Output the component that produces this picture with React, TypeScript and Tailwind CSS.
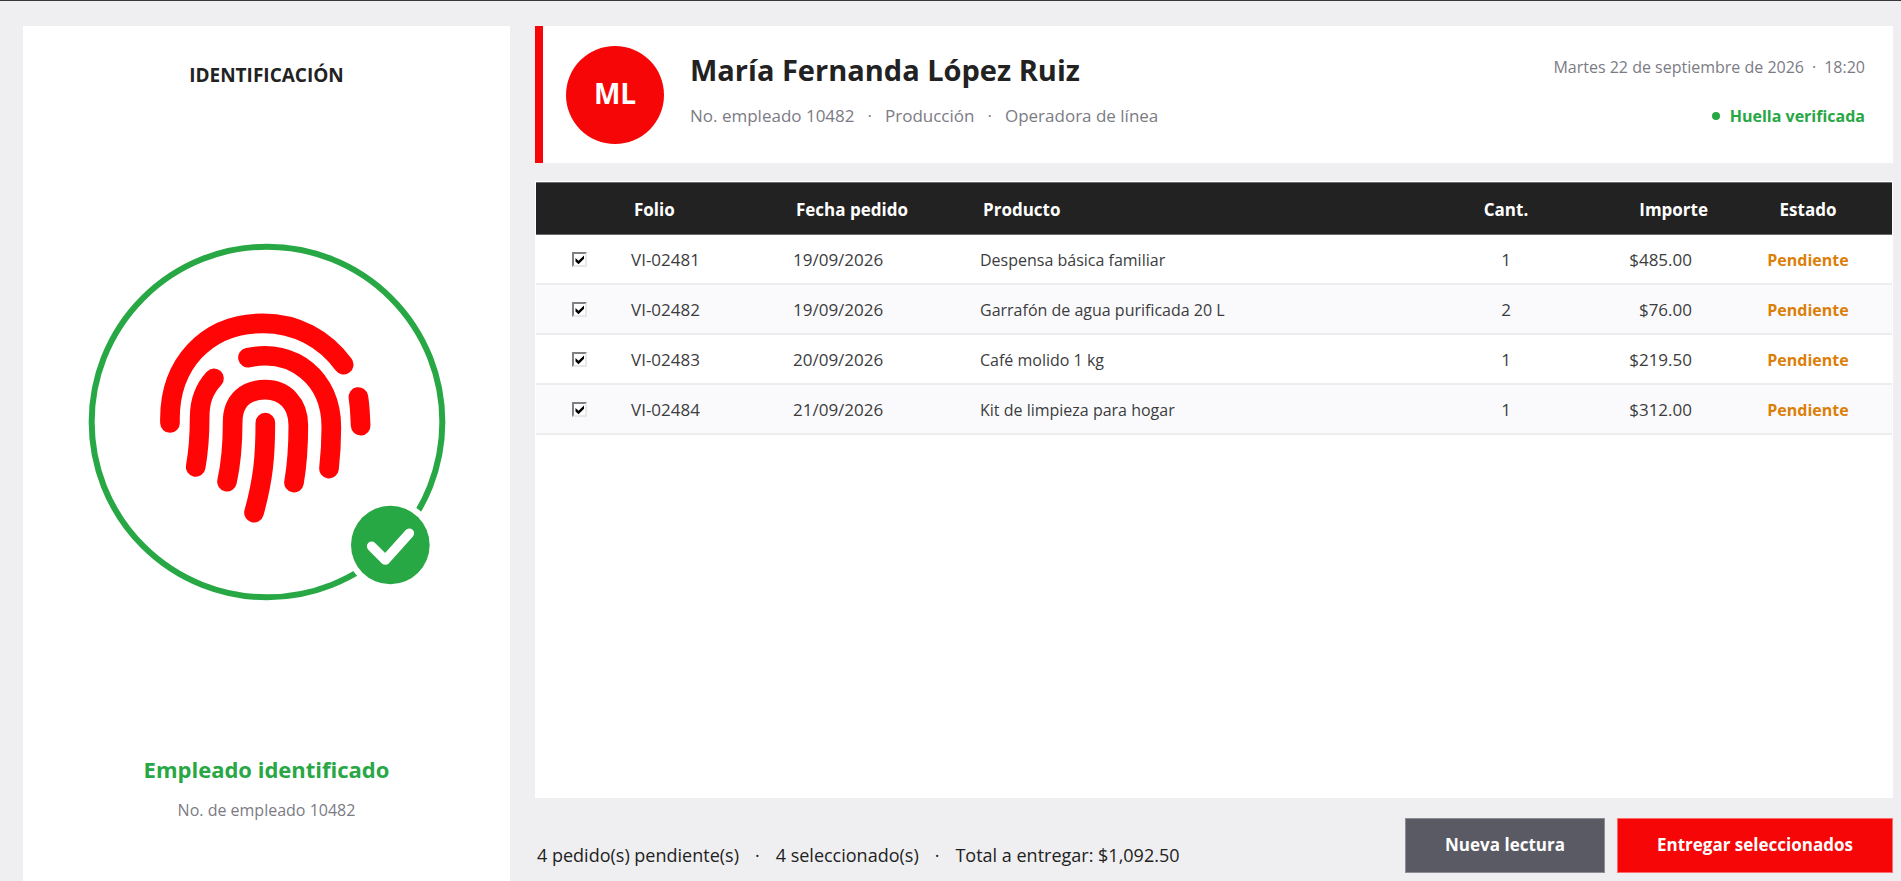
import { useState } from "react";

type Order = {
  folio: string;
  date: string;
  product: string;
  quantity: number;
  amount: number;
  status: string;
};

const orders: Order[] = [
  { folio: "VI-02481", date: "19/09/2026", product: "Despensa básica familiar", quantity: 1, amount: 485, status: "Pendiente" },
  { folio: "VI-02482", date: "19/09/2026", product: "Garrafón de agua purificada 20 L", quantity: 2, amount: 76, status: "Pendiente" },
  { folio: "VI-02483", date: "20/09/2026", product: "Café molido 1 kg", quantity: 1, amount: 219.5, status: "Pendiente" },
  { folio: "VI-02484", date: "21/09/2026", product: "Kit de limpieza para hogar", quantity: 1, amount: 312, status: "Pendiente" },
];

const money = (value: number) =>
  "$" + value.toLocaleString("en-US", { minimumFractionDigits: 2, maximumFractionDigits: 2 });

function FingerprintBadge() {
  return (
    <svg className="size-[358px] max-w-full" viewBox="25 38 1074 1074" fill="none" aria-hidden="true">
      <circle cx="562" cy="575" r="526" stroke="#28a745" strokeWidth="18" />
      <g stroke="#ff0505" strokeWidth="59" strokeLinecap="round" strokeLinejoin="round">
        <path d="M271 578 C266 402 380 279 550 279 C650 279 735 325 792 403" />
        <path d="M505 382 C642 352 755 445 755 590 C755 640 752 680 748 715" />
        <path d="M403 444 C372 478 360 512 360 560 C360 610 357 660 348 710" />
        <path d="M442 754 C455 695 459 640 459 575 C459 510 500 478 557 478 C615 478 656 520 656 585 C656 645 652 705 643 757" />
        <path d="M557 577 C557 680 550 750 523 847" />
        <path d="M836 500 C841 528 841 552 843 586" />
      </g>
      <circle cx="932" cy="944" r="136" fill="#ffffff" />
      <circle cx="932" cy="944" r="118" fill="#28a745" />
      <path d="M876 948 L917 989 L989 909" stroke="#ffffff" strokeWidth="29" strokeLinecap="round" strokeLinejoin="round" />
    </svg>
  );
}

function OrderCheckbox({ checked, label, onChange }: { checked: boolean; label: string; onChange: () => void }) {
  return (
    <span className="relative inline-block size-[15px] align-middle">
      <input
        type="checkbox"
        aria-label={label}
        checked={checked}
        onChange={onChange}
        className="block size-[15px] appearance-none border-2 border-t-[#808080] border-l-[#808080] border-r-[#e8e8e8] border-b-[#e8e8e8] bg-white"
      />
      {checked && (
        <svg className="pointer-events-none absolute inset-0 size-[15px]" viewBox="0 0 15 15" aria-hidden="true">
          <path d="M3.5 6 L6.5 8.8 L12 3.5 V6.8 L6.5 12.3 L3.5 9.5 Z" fill="#000000" />
        </svg>
      )}
    </span>
  );
}

export default function App() {
  const [selected, setSelected] = useState<string[]>(orders.map((order) => order.folio));

  const toggle = (folio: string) =>
    setSelected((current) =>
      current.includes(folio) ? current.filter((item) => item !== folio) : [...current, folio],
    );

  const total = orders
    .filter((order) => selected.includes(order.folio))
    .reduce((sum, order) => sum + order.amount, 0);

  return (
    <div className="flex min-h-screen gap-[25px] border-t border-[#39373d] bg-[#efeff1] pt-[25px] pr-2 pl-[23px] font-['Open_Sans','Noto_Sans',sans-serif] text-[#222222]">
      <aside className="flex w-[487px] shrink-0 flex-col items-center bg-white pt-9">
        <h2 className="text-[19px] leading-[26px] font-bold">IDENTIFICACIÓN</h2>
        <div className="mt-[155px]">
          <FingerprintBadge />
        </div>
        <p className="mt-[152px] text-[22px] leading-8 font-bold text-[#28a745]">Empleado identificado</p>
        <p className="mt-[13px] text-base leading-6 text-[#7b7b84]">No. de empleado 10482</p>
      </aside>

      <main className="flex min-w-0 flex-1 flex-col pb-2">
        <header className="flex h-[137px] border-l-8 border-[#f60606] bg-white pr-7 pl-[23px]">
          <div className="mt-5 flex size-[98px] shrink-0 items-center justify-center rounded-full bg-[#f60606] pb-1 text-[28px] font-bold text-white">
            ML
          </div>
          <div className="ml-[26px] flex-1 pt-6">
            <h1 className="text-[29px] leading-10 font-bold">María Fernanda López Ruiz</h1>
            <p className="mt-3.5 flex gap-[13px] text-[17px] leading-6 text-[#7b7b84]">
              <span>No. empleado 10482</span>
              <span>·</span>
              <span>Producción</span>
              <span>·</span>
              <span>Operadora de línea</span>
            </p>
          </div>
          <div className="flex flex-col items-end pt-[29px] text-base leading-6">
            <p className="flex gap-2 text-[#7b7b84]">
              <span>Martes 22 de septiembre de 2026</span>
              <span>·</span>
              <span>18:20</span>
            </p>
            <p className="mt-[25px] flex items-center gap-2.5 font-bold text-[#28a745]">
              <span className="size-2 rounded-full bg-[#28a745]" />
              Huella verificada
            </p>
          </div>
        </header>

        <section className="mt-[18px] flex-1 border border-white bg-white">
          <table className="w-full table-fixed border-separate border-spacing-0 text-base">
            <colgroup>
              <col className="w-[85px]" />
              <col className="w-[162px]" />
              <col className="w-[187px]" />
              <col />
              <col className="w-28" />
              <col className="w-[162px]" />
              <col className="w-[168px]" />
            </colgroup>
            <thead>
              <tr className="h-[53px] bg-[#222222] text-left text-[17px] text-white *:border-y *:border-[#6b6b6b] *:pt-0.5">
                <th aria-label="Seleccionar" />
                <th className="pl-[13px] font-bold">Folio</th>
                <th className="pl-[13px] font-bold">Fecha pedido</th>
                <th className="pl-[13px] font-bold">Producto</th>
                <th className="text-center font-bold">Cant.</th>
                <th className="pr-4 text-right font-bold">Importe</th>
                <th className="text-center font-bold">Estado</th>
              </tr>
            </thead>
            <tbody>
              {orders.map((order) => (
                <tr key={order.folio} className="h-[50px] text-[#3c3c40] even:bg-[#fafafc] *:border-b-2 *:border-[#ededf0] *:pt-0.5">
                  <td className="pb-1 pl-0.5 text-center">
                    <OrderCheckbox
                      checked={selected.includes(order.folio)}
                      label={"Seleccionar " + order.folio}
                      onChange={() => toggle(order.folio)}
                    />
                  </td>
                  <td className="pl-2.5 text-[17px]">{order.folio}</td>
                  <td className="pl-2.5 text-[17px]">{order.date}</td>
                  <td className="pl-2.5">{order.product}</td>
                  <td className="text-center text-[17px]">{order.quantity}</td>
                  <td className="pr-8 text-right text-[17px]">{money(order.amount)}</td>
                  <td className="text-center font-bold text-[#dc7f08]">{order.status}</td>
                </tr>
              ))}
            </tbody>
          </table>
        </section>

        <footer className="mt-5 flex items-start gap-3">
          <p className="flex flex-1 gap-4 pt-[23px] pl-0.5 text-lg leading-7">
            <span>{orders.length} pedido(s) pendiente(s)</span>
            <span>·</span>
            <span>{selected.length} seleccionado(s)</span>
            <span>·</span>
            <span>Total a entregar: {money(total)}</span>
          </p>
          <button type="button" className="h-[55px] w-[200px] border border-[#8c8c94] bg-[#5a5a64] pb-0.5 text-[17px] font-bold text-white">
            Nueva lectura
          </button>
          <button type="button" className="h-[55px] w-[276px] border border-[#fb6a6c] bg-[#f60606] pb-0.5 text-[17px] font-bold text-white">
            Entregar seleccionados
          </button>
        </footer>
      </main>
    </div>
  );
}
